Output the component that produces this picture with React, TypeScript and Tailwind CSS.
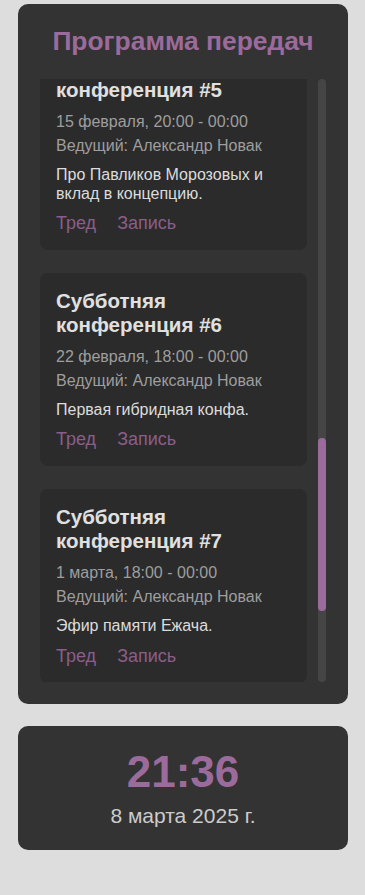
import { useLayoutEffect, useRef } from "react";

type Show = {
  title: string;
  time: string;
  host: string;
  description: string;
};

const shows: Show[] = [
  {
    title: "Субботняя конференция #1",
    time: "18 января, 18:00 - 00:00",
    host: "Ведущий: Александр Новак",
    description:
      "Первый выпуск. Знакомимся, рассказываем о формате, отвечаем на вопросы слушателей и обсуждаем планы на весь сезон вперёд.",
  },
  {
    title: "Субботняя конференция #2",
    time: "25 января, 18:00 - 00:00",
    host: "Ведущий: Александр Новак",
    description:
      "Разбор писем и звонков в эфир. Гости из соседних чатов, старые истории и новые мемы, которые появились за прошедшую неделю.",
  },
  {
    title: "Субботняя конференция #3",
    time: "1 февраля, 18:00 - 00:00",
    host: "Ведущий: Александр Новак",
    description:
      "Большой музыкальный выпуск. Слушаем треки от участников, спорим о вкусах и выбираем лучшую песню месяца всем составом.",
  },
  {
    title: "Субботняя конференция #4",
    time: "8 февраля, 18:00 - 00:00",
    host: "Ведущий: Александр Новак",
    description:
      "Вечер воспоминаний. Архивные записи первых эфиров, комментарии ведущего и ответы на самые странные вопросы из треда.",
  },
  {
    title: "Субботняя конференция #5",
    time: "15 февраля, 20:00 - 00:00",
    host: "Ведущий: Александр Новак",
    description: "Про Павликов Морозовых и вклад в концепцию.",
  },
  {
    title: "Субботняя конференция #6",
    time: "22 февраля, 18:00 - 00:00",
    host: "Ведущий: Александр Новак",
    description: "Первая гибридная конфа.",
  },
  {
    title: "Субботняя конференция #7",
    time: "1 марта, 18:00 - 00:00",
    host: "Ведущий: Александр Новак",
    description: "Эфир памяти Ежача.",
  },
  {
    title: "Субботняя конференция #8",
    time: "8 марта, 18:00 - 00:00",
    host: "Ведущий: Александр Новак",
    description: "Праздничный выпуск. Поздравления, музыка и звонки в эфир до утра.",
  },
];

function ShowCard({ show, id }: { show: Show; id?: string }) {
  return (
    <div id={id} className="bg-[#2b2b2b] rounded-lg p-4">
      <h3 className="text-[20.5px] leading-6 font-bold text-[#e0e0e0] mb-2">
        {show.title}
      </h3>
      <p className="text-base leading-6 text-[#9e9e9e]">{show.time}</p>
      <p className="text-base leading-6 text-[#9e9e9e]">{show.host}</p>
      <p className="text-base leading-[18.4px] text-[#dcdcdc] mt-2">
        {show.description}
      </p>
      <div className="flex gap-[21px] mt-[10px] text-[18px] leading-[21px] text-[#8a5e88]">
        <a href="#">Тред</a>
        <a href="#">Запись</a>
      </div>
    </div>
  );
}

export default function App() {
  const listRef = useRef<HTMLDivElement>(null);
  const innerRef = useRef<HTMLDivElement>(null);

  useLayoutEffect(() => {
    const list = listRef.current;
    const inner = innerRef.current;
    if (!list || !inner) return;
    const pin = () => {
      const target = document.getElementById("show-5");
      if (!target) return;
      const delta =
        target.getBoundingClientRect().top - list.getBoundingClientRect().top + 41;
      list.scrollTop += delta;
    };
    pin();
    const ro = new ResizeObserver(pin);
    ro.observe(inner);
    document.fonts?.ready.then(pin);
    const t = setInterval(pin, 100);
    const stop = setTimeout(() => clearInterval(t), 3000);
    return () => {
      ro.disconnect();
      clearInterval(t);
      clearTimeout(stop);
    };
  }, []);

  return (
    <div className="min-h-screen bg-[#dddddd] pt-1 font-['Liberation_Sans',Arial,sans-serif]">
      <section className="ml-[18px] w-[330px] bg-[#333333] rounded-[10px] p-[22px]">
        <h1 className="text-center text-[26.4px] leading-[30px] font-bold text-[#9b6b9c] mb-[23px]">
          Программа передач
        </h1>
        <div className="flex h-[603px] gap-[11px]">
          <div ref={listRef} className="flex-1 overflow-y-auto [scrollbar-width:none]">
            <div ref={innerRef} className="flex flex-col gap-[23px] pb-2">
              {shows.map((show, i) => (
                <ShowCard key={show.title} show={show} id={i === 4 ? "show-5" : undefined} />
              ))}
            </div>
          </div>
          {/* scrollbar */}
          <div className="w-2 h-full rounded-full bg-[#454545] flex flex-col">
            <div className="mt-[359px] h-[173px] rounded-full bg-[#9b6b9b]" />
          </div>
        </div>
      </section>

      <section className="ml-[18px] w-[330px] mt-[22px] bg-[#333333] rounded-[10px] pt-5 pb-[22px] text-center">
        <div className="text-[44px] leading-[51px] font-bold text-[#9b6b9c]">21:36</div>
        <div className="mt-[7px] text-[21px] leading-[24px] text-[#cccccc]">
          8 марта 2025 г.
        </div>
      </section>
    </div>
  );
}
